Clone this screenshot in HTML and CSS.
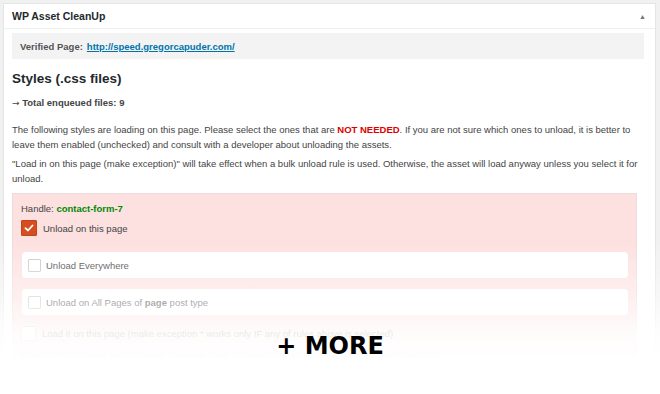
FILE: index.html
```html
<!DOCTYPE html>
<html lang="en">
<head>
    <meta charset="UTF-8" />
    <title>WP Asset CleanUp</title>
    <link rel="stylesheet" href="styles.css">
</head>
<body>
    <div class="postbox">
        <div class="postbox-header">
            <h2>WP Asset CleanUp</h2>
            <span class="toggle">&#9650;</span>
        </div>
        <div class="inside">
            <div class="verified">Verified Page: <a href="#">http://speed.gregorcapuder.com/</a></div>

            <h3>Styles (.css files)</h3>
            <p class="total"><span class="arrow">&rarr;</span> Total enqueued files: 9</p>

            <p>The following styles are loading on this page. Please select the ones that are <strong class="danger">NOT NEEDED</strong>. If you are not sure which ones to unload, it is better to leave them enabled (unchecked) and consult with a developer about unloading the assets.</p>
            <p class="last">"Load in on this page (make exception)" will take effect when a bulk unload rule is used. Otherwise, the asset will load anyway unless you select it for unload.</p>

            <div class="asset">
                <div class="handle">Handle: <strong>contact-form-7</strong></div>
                <label class="check-line">
                    <span class="box checked"><svg width="10" height="8" viewBox="0 0 10 8"><path d="M1.5 4.2 L4 6.5 L8.5 1.5" fill="none" stroke="#fff" stroke-width="1.8" stroke-linecap="round" stroke-linejoin="round"/></svg></span>
                    <span>Unload on this page</span>
                </label>
                <div class="rule">
                    <span class="box"></span>
                    <span>Unload Everywhere</span>
                </div>
                <div class="rule">
                    <span class="box"></span>
                    <span>Unload on All Pages of <strong>page</strong> post type</span>
                </div>
                <label class="check-line exception">
                    <span class="box"></span>
                    <span>Load it on this page (make exception * works only IF any of rules above is selected)</span>
                </label>
                <div class="source">Source: http://speed.gregorcapuder.com/wp-content/plugins/contact-form-7/includes/css/styles.css</div>
            </div>
        </div>
    </div>

    <div class="fade"></div>
    <div class="more">+ MORE</div>
</body>
</html>
```

FILE: styles.css
```css
* {
    box-sizing: border-box;
}

body {
    margin: 0;
    height: 394px;
    overflow: hidden;
    background: #f1f1f1;
    font-family: 'Liberation Sans', Arial, sans-serif;
    font-size: 9.5px;
    color: #444;
    position: relative;
}

.postbox {
    margin: 3px 4px 0 3px;
    background: #fff;
    border: 1px solid #e5e5e5;
    height: 420px;
}

.postbox-header {
    height: 25px;
    display: flex;
    align-items: center;
    justify-content: space-between;
    padding: 0 9px 0 8px;
    border-bottom: 1px solid #eee;
}

.postbox-header h2 {
    margin: 0;
    font-size: 10.5px;
    font-weight: bold;
    color: #23282d;
}

.toggle {
    font-size: 7px;
    color: #72777c;
}

.inside {
    padding: 4px 11px 0 8px;
}

.verified {
    background: #f3f3f3;
    height: 26px;
    display: flex;
    align-items: center;
    padding: 0 8px;
    font-weight: bold;
    color: #555;
    gap: 4px;
}

.verified a {
    color: #0073aa;
}

h3 {
    margin: 12px 0 0;
    font-size: 13.5px;
    font-weight: bold;
    color: #23282d;
}

p {
    margin: 0 0 4px;
    line-height: 15px;
}

p.total {
    font-weight: bold;
    margin: 9px 0 11px;
}

.arrow {
    font-family: 'DejaVu Sans', sans-serif;
    font-weight: normal;
    font-size: 9px;
}

p.last {
    margin-bottom: 7px;
}

.danger {
    color: #dc0000;
}

.asset {
    background: #fde0e0;
    border: 1px solid #ecdcdc;
    margin-right: 7px;
    padding: 9px 8px 8px 8px;
}

.handle strong {
    color: #008a00;
}

.check-line {
    display: flex;
    align-items: center;
    gap: 6px;
    margin: 6px 0 16px;
}

.check-line.exception {
    margin: 11px 0 8px;
}

.box {
    width: 15px;
    height: 15px;
    border: 1px solid #c8c8c8;
    background: #fff;
    display: inline-flex;
    align-items: center;
    justify-content: center;
    border-radius: 1px;
    flex: none;
}

.box.checked {
    width: 16px;
    height: 16px;
    background: #d54e21;
    border-color: #c3431a;
}

.rule {
    background: #fff;
    border-radius: 4px;
    height: 26px;
    display: flex;
    align-items: center;
    gap: 5px;
    padding: 0 6px;
    margin: 0 0 11px 1px;
}

.rule .box {
    width: 13px;
    height: 13px;
}

.source {
    color: #666;
}

.fade {
    position: absolute;
    left: 0;
    right: 0;
    top: 240px;
    height: 154px;
    background: linear-gradient(to bottom, rgba(255,255,255,0) 0%, rgba(255,255,255,0.5) 38%, rgba(255,255,255,0.88) 60%, #fff 78%);
}

.more {
    position: absolute;
    left: 0;
    right: 0;
    top: 332px;
    text-align: center;
    font-family: 'DejaVu Sans', sans-serif;
    font-weight: bold;
    font-size: 24px;
    color: #000;
}
```
